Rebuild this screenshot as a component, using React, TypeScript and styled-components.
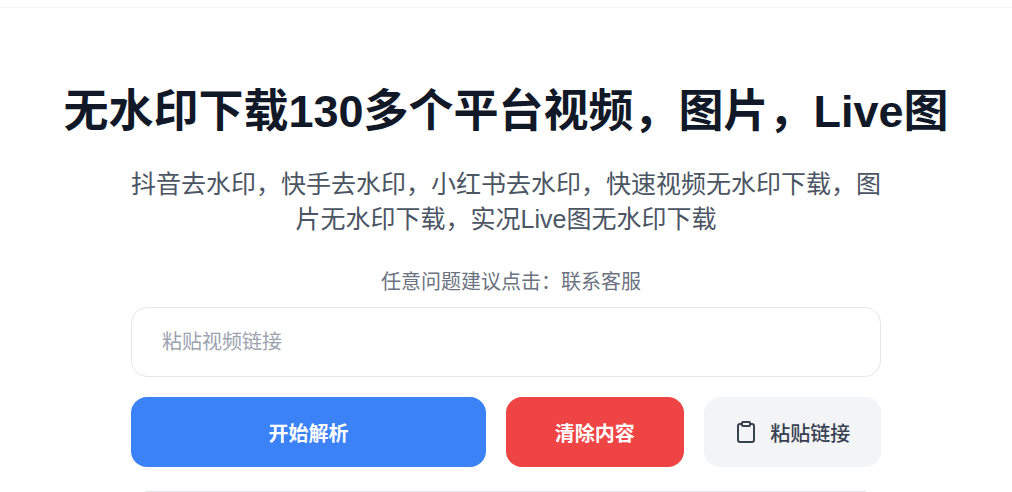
import styled, { createGlobalStyle } from "styled-components";
import { Clipboard } from "lucide-react";

const GlobalStyle = createGlobalStyle`
  html, body {
    margin: 0;
    padding: 0;
    background: #ffffff;
    overflow: hidden;
    font-family: "Liberation Sans", "Noto Sans CJK SC", sans-serif;
  }
  * {
    box-sizing: border-box;
  }
`;

const Page = styled.div`
  width: 1012px;
  height: 492px;
  overflow: hidden;
`;

const TopBar = styled.header`
  height: 8px;
  border-bottom: 1px solid #f3f4f6;
`;

const Hero = styled.main`
  display: flex;
  flex-direction: column;
  align-items: center;
  padding-top: 74px;
`;

const Title = styled.h1`
  margin: 0;
  font-size: 45px;
  line-height: 60px;
  font-weight: 700;
  color: #111827;
  white-space: nowrap;
`;

const Subtitle = styled.p`
  width: 750px;
  margin: 25px 0 0;
  font-size: 25px;
  line-height: 35px;
  color: #4b5563;
  text-align: center;
`;

const Note = styled.p`
  margin: 30px 0 0;
  padding-left: 10px;
  font-size: 20px;
  line-height: 30px;
  color: #6b7280;
`;

const Form = styled.form`
  width: 750px;
  margin-top: 10px;
  display: flex;
  flex-direction: column;
  gap: 20px;
`;

const LinkInput = styled.input`
  width: 100%;
  height: 70px;
  padding: 0 30px;
  border: 1px solid #e5e7eb;
  border-radius: 16px;
  outline: none;
  font: inherit;
  font-size: 20px;
  color: #111827;

  &::placeholder {
    color: #9ca3af;
    opacity: 1;
  }
`;

const Actions = styled.div`
  display: flex;
  gap: 20px;
`;

const Button = styled.button<{ $bg: string; $fg: string; $grow: number; $weight: number }>`
  flex: ${(p) => p.$grow} 1 0;
  height: 70px;
  padding: 0;
  display: flex;
  align-items: center;
  justify-content: center;
  gap: 12px;
  border: none;
  border-radius: 16px;
  background: ${(p) => p.$bg};
  color: ${(p) => p.$fg};
  font: inherit;
  font-size: 20px;
  font-weight: ${(p) => p.$weight};
  cursor: pointer;
`;

const Divider = styled.hr`
  width: 720px;
  margin: 24px 0 0;
  border: none;
  border-top: 1px solid #e5e7eb;
`;

export default function App() {
  return (
    <Page>
      <GlobalStyle />
      <TopBar />
      <Hero>
        <Title>无水印下载130多个平台视频，图片，Live图</Title>
        <Subtitle>
          抖音去水印，快手去水印，小红书去水印，快速视频无水印下载，图片无水印下载，实况Live图无水印下载
        </Subtitle>
        <Note>任意问题建议点击：联系客服</Note>
        <Form onSubmit={(e) => e.preventDefault()}>
          <LinkInput placeholder="粘贴视频链接" />
          <Actions>
            <Button $bg="#3b82f6" $fg="#ffffff" $grow={2} $weight={600}>开始解析</Button>
            <Button $bg="#ef4444" $fg="#ffffff" $grow={1} $weight={600}>清除内容</Button>
            <Button $bg="#f3f4f6" $fg="#374151" $grow={1} $weight={500}>
              <Clipboard size={24} />
              粘贴链接
            </Button>
          </Actions>
        </Form>
        <Divider />
      </Hero>
    </Page>
  );
}
